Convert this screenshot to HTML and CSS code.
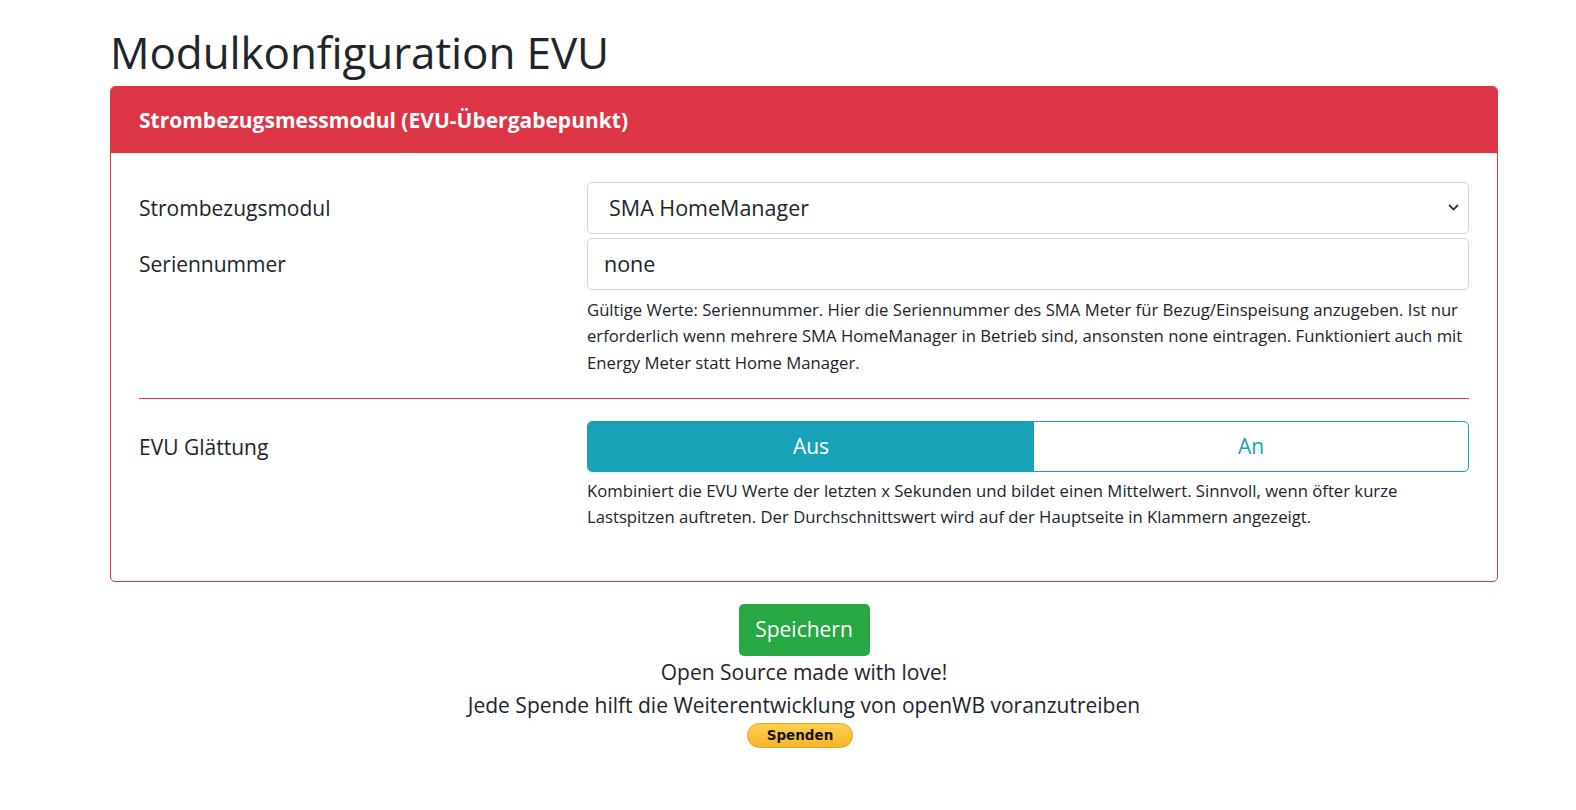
FILE: index.html
```html
<!DOCTYPE html>
<html lang="de">
<head>
<meta charset="utf-8">
<title>Modulkonfiguration EVU</title>
<link rel="stylesheet" href="styles.css">
</head>
<body>
<div class="container">
  <h1 class="title">Modulkonfiguration EVU</h1>
  <div class="card">
    <div class="card-header">Strombezugsmessmodul (EVU-Übergabepunkt)</div>
    <div class="card-body">
      <div class="form-row row-first">
        <label class="label">Strombezugsmodul</label>
        <div class="field">
          <div class="select">
            <span>SMA HomeManager</span>
            <svg class="chev" width="11" height="7" viewBox="0 0 11 7"><path d="M1 1l4.5 4.5L10 1" fill="none" stroke="#343a40" stroke-width="1.9"/></svg>
          </div>
        </div>
      </div>
      <div class="form-row">
        <label class="label">Seriennummer</label>
        <div class="field">
          <div class="input">none</div>
          <p class="help">Gültige Werte: Seriennummer. Hier die Seriennummer des SMA Meter für Bezug/Einspeisung anzugeben. Ist nur erforderlich wenn mehrere SMA HomeManager in Betrieb sind, ansonsten none eintragen. Funktioniert auch mit Energy Meter statt Home Manager.</p>
        </div>
      </div>
      <hr class="divider">
      <div class="form-row">
        <label class="label">EVU Glättung</label>
        <div class="field">
          <div class="toggle">
            <div class="tbtn active">Aus</div>
            <div class="tbtn">An</div>
          </div>
          <p class="help help2">Kombiniert die EVU Werte der letzten x Sekunden und bildet einen Mittelwert. Sinnvoll, wenn öfter kurze Lastspitzen auftreten. Der Durchschnittswert wird auf der Hauptseite in Klammern angezeigt.</p>
        </div>
      </div>
    </div>
  </div>
  <div class="footer">
    <div class="save">Speichern</div>
    <div class="line">Open Source made with love!</div>
    <div class="line">Jede Spende hilft die Weiterentwicklung von openWB voranzutreiben</div>
    <div class="paypal">Spenden</div>
  </div>
</div>
</body>
</html>
```
FILE: styles.css
```css
html, body {
  margin: 0;
  padding: 0;
  background: #fff;
}
body {
  font-family: "Open Sans", "Noto Sans", sans-serif;
  color: #212529;
  font-size: 17.6px;
  line-height: 1.5;
}
.container {
  width: 1388px;
  margin-left: 110px;
}
.title {
  font-size: 44px;
  font-weight: 500;
  line-height: 52.8px;
  margin: 0;
  padding-top: 26px;
  padding-bottom: 7px;
  letter-spacing: -0.1px;
}
.card {
  border: 1px solid #dc3545;
  border-radius: 5px;
  overflow: hidden;
}
.card-header {
  background: #dc3545;
  color: #fff;
  font-weight: 700;
  font-size: 21px;
  height: 66px;
  line-height: 66px;
  padding: 0 28px;
}
.card-body {
  padding: 29px 28px 50px 28px;
}
.form-row {
  display: grid;
  grid-template-columns: 448px 1fr;
}
.row-first {
  margin-bottom: 4px;
}
.label {
  font-size: 21px;
  line-height: 52px;
}
.select, .input {
  box-sizing: border-box;
  height: 52px;
  border: 1px solid #ced4da;
  border-radius: 5px;
  font-size: 21.5px;
  display: flex;
  align-items: center;
}
.select {
  padding: 0 9px 0 21px;
  justify-content: space-between;
}
.input {
  padding: 0 16px;
}
.help {
  margin: 7px 0 0;
  font-size: 16.7px;
  line-height: 26.4px;
}
.help2 {
  margin-top: 6px;
}
.divider {
  border: 0;
  border-top: 1px solid #dc3545;
  margin: 22px 0 22px;
}
.toggle {
  display: grid;
  grid-template-columns: 446px 1fr;
  height: 51px;
  box-sizing: border-box;
  border: 1px solid #17a2b8;
  border-radius: 5px;
  overflow: hidden;
}
.tbtn {
  display: flex;
  align-items: center;
  justify-content: center;
  font-size: 21px;
  color: #17a2b8;
}
.tbtn.active {
  background: #17a2b8;
  color: #fff;
}
.footer {
  display: flex;
  flex-direction: column;
  align-items: center;
  padding-top: 22px;
}
.save {
  background: #28a745;
  color: #fff;
  font-size: 21px;
  width: 131px;
  height: 52px;
  border-radius: 5px;
  display: flex;
  align-items: center;
  justify-content: center;
}
.line {
  font-size: 21px;
  line-height: 33px;
}
.paypal {
  margin-top: 1px;
  margin-right: 8px;
  width: 106px;
  height: 25px;
  border-radius: 12.5px;
  background: linear-gradient(#ffd050, #f7b52a);
  border: 1px solid #e2a523;
  box-sizing: border-box;
  font-family: "DejaVu Sans", Verdana, sans-serif;
  font-weight: 700;
  font-size: 13.5px;
  color: #14161a;
  display: flex;
  align-items: center;
  justify-content: center;
}
```
